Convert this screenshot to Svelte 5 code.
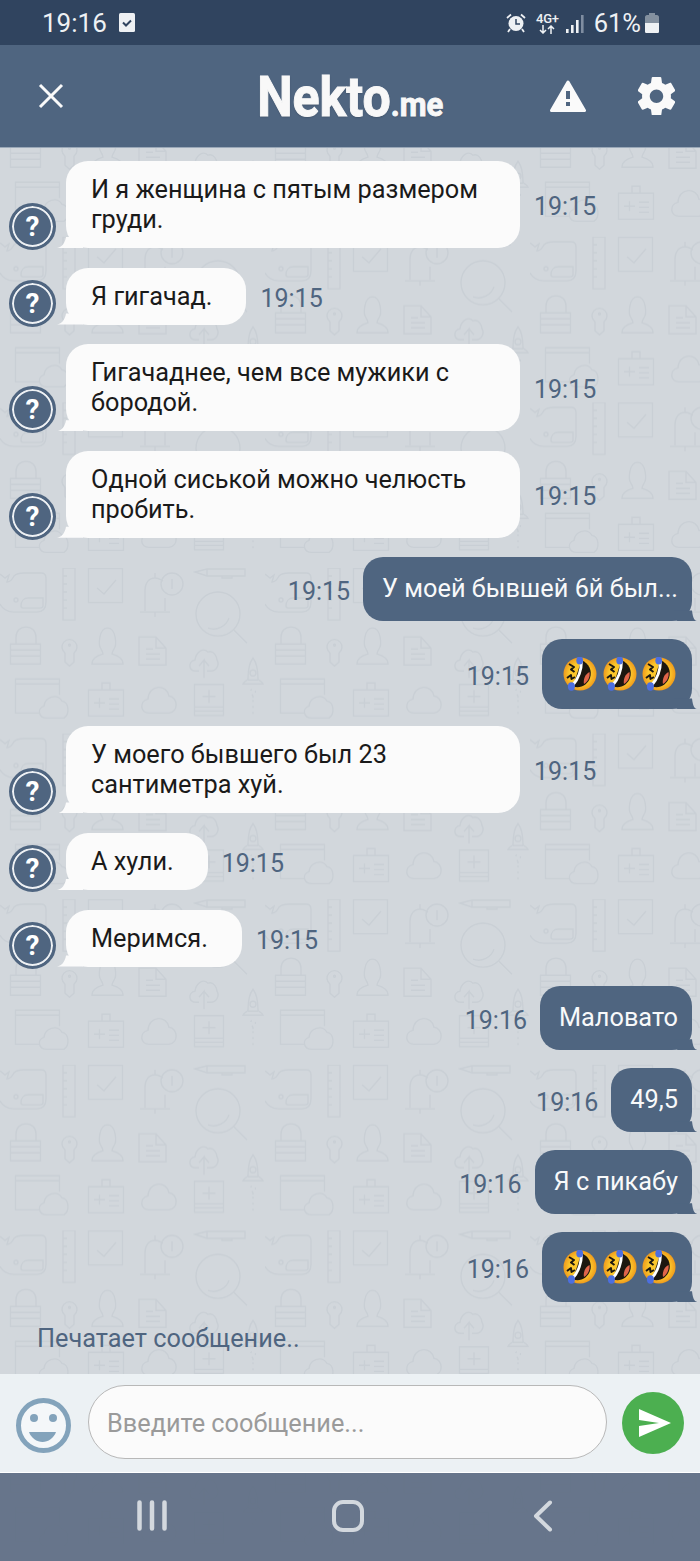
<script>
  const messages = [
    { dir: 'in', text: 'И я женщина с пятым размером груди.', time: '19:15' },
    { dir: 'in', text: 'Я гигачад.', time: '19:15' },
    { dir: 'in', text: 'Гигачаднее, чем все мужики с бородой.', time: '19:15' },
    { dir: 'in', text: 'Одной сиськой можно челюсть пробить.', time: '19:15' },
    { dir: 'out', text: 'У моей бывшей 6й был...', time: '19:15' },
    { dir: 'out', emoji: true, time: '19:15' },
    { dir: 'in', text: 'У моего бывшего был 23 сантиметра хуй.', time: '19:15' },
    { dir: 'in', text: 'А хули.', time: '19:15' },
    { dir: 'in', text: 'Меримся.', time: '19:15' },
    { dir: 'out', text: 'Маловато', time: '19:16' },
    { dir: 'out', text: '49,5', time: '19:16' },
    { dir: 'out', text: 'Я с пикабу', time: '19:16' },
    { dir: 'out', emoji: true, time: '19:16' }
  ];
</script>

{#snippet rofl()}
  <svg class="rofl" viewBox="0 0 34 34" width="34" height="34">
    <circle cx="17" cy="17" r="16.5" fill="url(#face)" />
    <path d="M18.400 3.300C26 6 29.500 14 27 21 24.500 28 17 32 10 29.300Z" fill="#1c1710" />
    <path d="M26.500 15c.8 5-1.500 9.500-5.500 12-1-4 1-10 5.500-12Z" fill="#e0654a" />
    <path d="M18.400 4C18.500 12 15.500 22 9.500 28.500" fill="none" stroke="#fff" stroke-width="3" />
    <path d="M6 7l5 3-3 2.500 3.500 2.500M4 21l4-3 .5 4 3.500-2" fill="none" stroke="#1c1710" stroke-width="2" stroke-linejoin="round" />
    <ellipse cx="16.700" cy="3.500" rx="3.400" ry="3.900" fill="#4d6fe0" />
    <ellipse cx="8.400" cy="29.500" rx="3.500" ry="4.200" fill="#4d6fe0" />
  </svg>
{/snippet}

<div class="phone">
  <svg class="pattern" width="700" height="1561">
    <defs>
      <radialGradient id="face">
        <stop offset="0.65" stop-color="#fcc72c" />
        <stop offset="1" stop-color="#ef9b1c" />
      </radialGradient>
      <pattern id="doodles" width="265" height="165.6" patternUnits="userSpaceOnUse" y="71.2">
        <g fill="none" stroke="#c9cfd5" stroke-width="1.400">
          <!-- whale -->
          <path d="M0 6l5 4 4-3-2 7c3 0 5-2 7-6 3-3 6-3 10-3h17c3 0 5 2 5 5v24c0 6-3 10-9 10H14C7 44 2 40 0 36" />
          <circle cx="16" cy="32" r="2" />
          <path d="M21 38c0-5 3-8 7-8h15v8c0 1-1 2-3 2H23c-1 0-2-1-2-2Z" />
          <!-- ruler -->
          <path d="M63 0h12v52H63ZM63 8h4M63 16h4M63 24h4M63 32h4M63 40h4" />
          <!-- checkbox -->
          <path d="M88.500 0.500h34v34h-34ZM97 20l7 6 12-14" />
          <!-- bell -->
          <path d="M145 43V22c0-7 4-12 10-12 4 0 6 2 8 3M165 30v13M140 44h30M155 44v5M155 5v5" />
          <circle cx="172" cy="16" r="11" />
          <path d="M172 11v10" />
          <!-- pen -->
          <path d="M195 4l12-3h38v7h-38ZM207 1v7M222 8v2h10V8" />
          <!-- magnifier -->
          <circle cx="218" cy="46" r="22" />
          <path d="M234 62l13 13M208 60c8 3 18-1 21-10" />
          <!-- lock -->
          <path d="M10.500 76h30v20h-30ZM10.500 82h30M10.500 88h30M16 76V69c0-6 4-10 10-10s10 4 10 10v7" />
          <!-- key -->
          <path d="M65 85a7.500 7.500 0 1 1 9 0v9l-4.500 4-4.500-4Z" />
          <circle cx="69.500" cy="77" r="1" />
          <!-- person -->
          <path d="M92 96c0-6 5-8 11-10 0-2-1-3-2-5-3-4-2-21 6.500-21s9.500 17 6.500 21c-1 2-2 3-2 5 6 2 11 4 11 10Z" />
          <!-- doc -->
          <path d="M139 69h17l10 11v17h-27ZM156 69v11h10M146 81h7M146 86h14M146 91h14" />
          <!-- upload cloud -->
          <path d="M199 103h-3c-8 0-8-10-1-11 1-8 8-13 13-8 6-2 9 5 9 8 3 5-1 11-6 11h-4M204 110V92l-5 6M204 92l5 6" />
          <!-- rocket -->
          <path d="M243 116c1-3 4-3 5-5 0-8 1-16 5-21 4 5 5 13 5 21 1 2 4 2 5 5ZM248 112h10" />
          <circle cx="253" cy="105" r="3" />
          <path d="M253 128l-2-3a2.500 2.500 0 1 1 4 0ZM253 132v18" stroke-dasharray="2 4" />
          <path d="M253 128v2" />
          <!-- browser window with cloud -->
          <path d="M39 145H15.500v-34h44v16M15.500 116h44" />
          <path d="M47 150c-9 0-10-10-3-12 1-9 13-13 18-5 7 1 8 13 2 17Z" />
          <!-- id badge -->
          <path d="M88.500 122h35v26h-35ZM102 122v-7h8v7M94 135h11M99.500 130v10M109 131h10M109 136h10M109 141h10" />
          <!-- cloud -->
          <path d="M149 145c-9 0-10-12-1-14 1-15 19-15 21-3 9 1 10 16 0 17Z" />
          <!-- book -->
          <path d="M194.500 116.500h29v31h-29ZM194.500 139h29M194.500 143h29M209 122v13M202.500 128.500h13" />
        </g>
      </pattern>
    </defs>
    <rect width="700" height="1561" fill="#d2d7dc" />
    <rect width="700" height="1561" fill="url(#doodles)" />
  </svg>

  <div class="status">
    <span class="clock">19:16</span>
    <svg class="status-check" viewBox="0 0 16 19" width="16" height="19">
      <rect width="16" height="19" rx="1.500" fill="#eef1f4" />
      <path d="M4 9.500l3 3 5-5" fill="none" stroke="#30445f" stroke-width="2" />
    </svg>
    <span class="status-right">
      <svg viewBox="0 0 20 20" width="20" height="20">
        <circle cx="10" cy="10.500" r="7.500" fill="#eef1f4" />
        <path d="M10 6v5h4" fill="none" stroke="#30445f" stroke-width="1.500" />
        <path d="M1 5l4-3.500M19 5l-4-3.500M4 16l-2 3M16 16l2 3" stroke="#eef1f4" stroke-width="1.800" />
      </svg>
      <span class="net">
        <span class="net-label">4G+</span>
        <svg viewBox="0 0 16 9" width="16" height="9">
          <path d="M4 0v8M1 5l3 3 3-3M12 9V1M9 4l3-3 3 3" fill="none" stroke="#eef1f4" stroke-width="1.500" />
        </svg>
      </span>
      <svg class="signal" viewBox="0 0 18 18" width="18" height="18">
        <rect x="0" y="14" width="2.600" height="4" fill="#eef1f4" />
        <rect x="5" y="10" width="2.600" height="8" fill="#eef1f4" />
        <rect x="10" y="5" width="2.600" height="13" fill="#eef1f4" />
        <rect x="15" y="0" width="2.600" height="18" fill="#7f8da1" />
      </svg>
      <span class="battery-text">61%</span>
      <svg viewBox="0 0 14 20" width="14" height="20">
        <path d="M4 0h6v2h2c1 0 2 1 2 2v8H0V4c0-1 1-2 2-2h2Z" fill="#83909f" />
        <path d="M0 10h14v8.500c0 1-.7 1.500-1.500 1.500h-11C.7 20 0 19.500 0 18.500Z" fill="#eef1f4" />
      </svg>
    </span>
  </div>

  <header class="header">
    <svg class="close" viewBox="0 0 26 26" width="26" height="26">
      <path d="M2 2l22 22M24 2L2 24" stroke="#fafafa" stroke-width="3" />
    </svg>
    <div class="logo"><span class="logo-main">Nekto</span><span class="logo-tld">.me</span></div>
    <div class="header-actions">
      <svg viewBox="0 0 36 33" width="36" height="33">
        <path d="M18 2L34.500 30.500H1.500Z" fill="#fafafa" stroke="#fafafa" stroke-width="3" stroke-linejoin="round" />
        <rect x="16" y="11" width="4" height="8" fill="#4f6580" />
        <rect x="16" y="22" width="4" height="4" fill="#4f6580" />
      </svg>
      <svg viewBox="2.400 2 19.200 20" width="37" height="38.500">
        <path fill="#fafafa" d="M19.430 12.980c.04-.320.070-.640.070-.980s-.030-.660-.070-.980l2.110-1.650c.190-.150.240-.420.120-.640l-2-3.460c-.120-.220-.390-.300-.610-.220l-2.490 1c-.520-.400-1.080-.730-1.690-.980l-.380-2.650C14.460 2.180 14.250 2 14 2h-4c-.250 0-.460.180-.490.420l-.380 2.650c-.610.250-1.170.590-1.690.980l-2.490-1c-.230-.090-.490 0-.610.220l-2 3.460c-.130.220-.070.490.120.640l2.110 1.650c-.040.320-.070.650-.070.980s.030.660.070.980l-2.110 1.650c-.190.150-.240.420-.120.640l2 3.460c.120.220.390.300.610.220l2.490-1c.520.400 1.080.730 1.690.980l.380 2.650c.030.240.240.420.490.420h4c.250 0 .460-.180.490-.420l.380-2.650c.610-.250 1.170-.590 1.690-.980l2.490 1c.230.090.490 0 .610-.220l2-3.460c.120-.220.070-.490-.120-.640l-2.110-1.650ZM12 15.500c-1.930 0-3.500-1.570-3.500-3.500s1.570-3.500 3.500-3.500 3.500 1.570 3.500 3.500-1.570 3.500-3.500 3.500Z" />
      </svg>
    </div>
  </header>

  <main class="chat">
    <div class="list">
      {#each messages as m}
        <div class="msg {m.dir}">
          {#if m.dir === 'in'}
            <div class="avatar"><span>?</span></div>
          {:else}
            <span class="time">{m.time}</span>
          {/if}
          <div class="bubble" class:emoji={m.emoji}>
            {#if m.emoji}
              {@render rofl()}{@render rofl()}{@render rofl()}
            {:else}
              {m.text}
            {/if}
          </div>
          {#if m.dir === 'in'}
            <span class="time">{m.time}</span>
          {/if}
        </div>
      {/each}
    </div>
    <div class="typing">Печатает сообщение..</div>
  </main>

  <div class="composer">
    <svg class="smile" viewBox="0 0 55 55" width="55" height="55">
      <circle cx="27.500" cy="27.500" r="25" fill="#f4f7f9" stroke="#83a3bb" stroke-width="5" />
      <circle cx="18" cy="20" r="4" fill="#83a3bb" />
      <circle cx="37" cy="20" r="4" fill="#83a3bb" />
      <path d="M13 34h27c-2 6-8 10-13.500 10S15 40 13 34Z" fill="#83a3bb" />
    </svg>
    <input class="field" type="text" placeholder="Введите сообщение..." />
    <div class="send">
      <svg viewBox="0 0 32 28" width="32" height="28">
        <path d="M0 0l32 14L0 28V17l20-3L0 11Z" fill="#fff" />
      </svg>
    </div>
  </div>

  <nav class="softkeys">
    <svg viewBox="0 0 30 31" width="30" height="31">
      <path d="M2.500 2.500v26M15 2.500v26M27.500 2.500v26" stroke="#d3d8de" stroke-width="4.500" stroke-linecap="round" />
    </svg>
    <svg viewBox="0 0 32 32" width="32" height="32">
      <rect x="2" y="2" width="28" height="28" rx="9" fill="none" stroke="#d3d8de" stroke-width="4" />
    </svg>
    <svg viewBox="0 0 20 32" width="20" height="32">
      <path d="M17 2.500L3 16l14 13.500" fill="none" stroke="#d3d8de" stroke-width="4" stroke-linecap="round" stroke-linejoin="round" />
    </svg>
  </nav>
</div>

<style>
  :global(body) {
    margin: 0;
  }

  .phone {
    position: relative;
    width: 700px;
    height: 1561px;
    overflow: hidden;
    display: flex;
    flex-direction: column;
    font-family: Roboto, sans-serif;
  }

  .pattern {
    position: absolute;
    inset: 0;
  }

  .status, .header, .chat, .composer, .softkeys {
    position: relative;
  }

  .status {
    height: 45px;
    box-sizing: border-box;
    padding: 0 41px 0 42px;
    background: #30445f;
    color: #eef1f4;
    display: flex;
    align-items: center;
  }

  .clock {
    font-size: 26px;
    margin-right: 12px;
  }

  .status-right {
    margin-left: auto;
    display: flex;
    align-items: center;
  }

  .net {
    display: flex;
    flex-direction: column;
    align-items: center;
    margin: 0 7px 0 10px;
  }

  .net-label {
    font-size: 13px;
    font-weight: 500;
    line-height: 13px;
    letter-spacing: -0.3px;
  }

  .battery-text {
    font-size: 25.500px;
    margin: 0 4px 0 10px;
  }

  .signal {
    margin-top: 3px;
  }

  .header {
    height: 103px;
    box-sizing: border-box;
    padding: 0 25px;
    background: #4f6580;
    border-bottom: 1px solid #9aa8b8;
    display: grid;
    grid-template-columns: 1fr auto 1fr;
    align-items: center;
  }

  .close {
    margin-left: 13px;
  }

  .logo {
    padding-top: 16px;
    color: #f8f8f8;
    font-family: Roboto, sans-serif;
    font-weight: 700;
    line-height: 60px;
    -webkit-text-stroke: 1px #f8f8f8;
    text-shadow: 0 1px 2px rgba(0, 0, 0, 0.25);
    white-space: nowrap;
    transform: scaleX(0.91);
  }

  .logo-main {
    font-size: 55px;
  }

  .logo-tld {
    font-size: 34px;
  }

  .header-actions {
    justify-self: end;
    display: flex;
    align-items: center;
    gap: 52px;
  }

  .chat {
    flex: 1;
    display: flex;
    flex-direction: column;
    padding-top: 13px;
  }

  .list {
    flex: 1;
  }

  .msg {
    display: flex;
    align-items: center;
    margin-bottom: 19.600px;
  }

  .msg.in {
    padding-left: 9px;
  }

  .msg.out {
    justify-content: flex-end;
    padding-right: 8px;
    margin-bottom: 18px;
  }

  .msg.out:has(.emoji) {
    margin-bottom: 17px;
  }

  .avatar {
    position: relative;
    align-self: flex-end;
    flex: none;
    width: 47px;
    height: 47px;
    margin: 0 10px -2px 0;
    box-sizing: border-box;
    border-radius: 50%;
    background: #4f6580;
    border: 3px solid #4f6580;
    box-shadow: inset 0 0 0 2px #eef1f4;
    color: #fff;
    font-weight: 700;
    font-size: 28px;
    display: flex;
    align-items: center;
    justify-content: center;
  }

  .bubble {
    position: relative;
    box-sizing: border-box;
    max-width: 454px;
    padding: 14px 34px 13px 25px;
    border-radius: 22px;
    background: #fbfbfb;
    color: #1a1a1a;
    font-size: 25.300px;
    line-height: 30px;
  }

  .bubble::after {
    content: '';
    position: absolute;
    left: -9px;
    bottom: 0;
    width: 26px;
    height: 14px;
    background: inherit;
    clip-path: path("M0 14C5 13 8 9 9 3H26V14Z");
  }

  .out .bubble {
    padding: 17px 14px 17px 19px;
    background: #4f6580;
    color: #f8f9fa;
    border-radius: 20px;
  }

  .out .bubble::after {
    left: auto;
    right: -8px;
    clip-path: path("M26 14C21 14 19 12 18 3H0V11L4 14Z");
  }

  .bubble.emoji {
    display: flex;
    gap: 5.500px;
    padding: 18px 16px 18px 21px;
  }

  .rofl {
    display: block;
  }

  .time {
    flex: none;
    margin-top: 4px;
    font-size: 25px;
    color: #4f6580;
    margin-left: 14px;
  }

  .out .time {
    margin: 4px 13px 0 0;
  }

  .typing {
    padding: 0 0 20px 37px;
    font-size: 25.300px;
    line-height: 30px;
    color: #4f6580;
  }

  .composer {
    height: 99px;
    box-sizing: border-box;
    padding: 11px 16px 14px;
    background: #ecf1f4;
    border-bottom: 1px solid #fff;
    display: flex;
    align-items: center;
  }

  .smile {
    flex: none;
    margin-top: 8px;
  }

  .field {
    width: 520px;
    height: 74px;
    box-sizing: border-box;
    margin: 0 15px 0 17px;
    padding: 3px 18px 0;
    border: 1px solid #b8b8b8;
    border-radius: 37px;
    background: #fbfbfb;
    font-family: Roboto, sans-serif;
    font-size: 25.300px;
  }

  .field::placeholder {
    color: #9a9a9a;
    opacity: 1;
  }

  .send {
    flex: none;
    box-sizing: border-box;
    width: 62px;
    height: 62px;
    margin-top: 3px;
    padding-left: 4px;
    border-radius: 50%;
    background: #4caf50;
    display: flex;
    align-items: center;
    justify-content: center;
  }

  .softkeys {
    height: 88px;
    box-sizing: border-box;
    padding: 27px 0 30px 137px;
    background: rgba(95, 110, 132, 0.93);
    display: flex;
    align-items: flex-start;
  }

  .softkeys svg + svg {
    margin-left: 165px;
  }

  .softkeys svg:last-child {
    margin-left: 169px;
  }
</style>
